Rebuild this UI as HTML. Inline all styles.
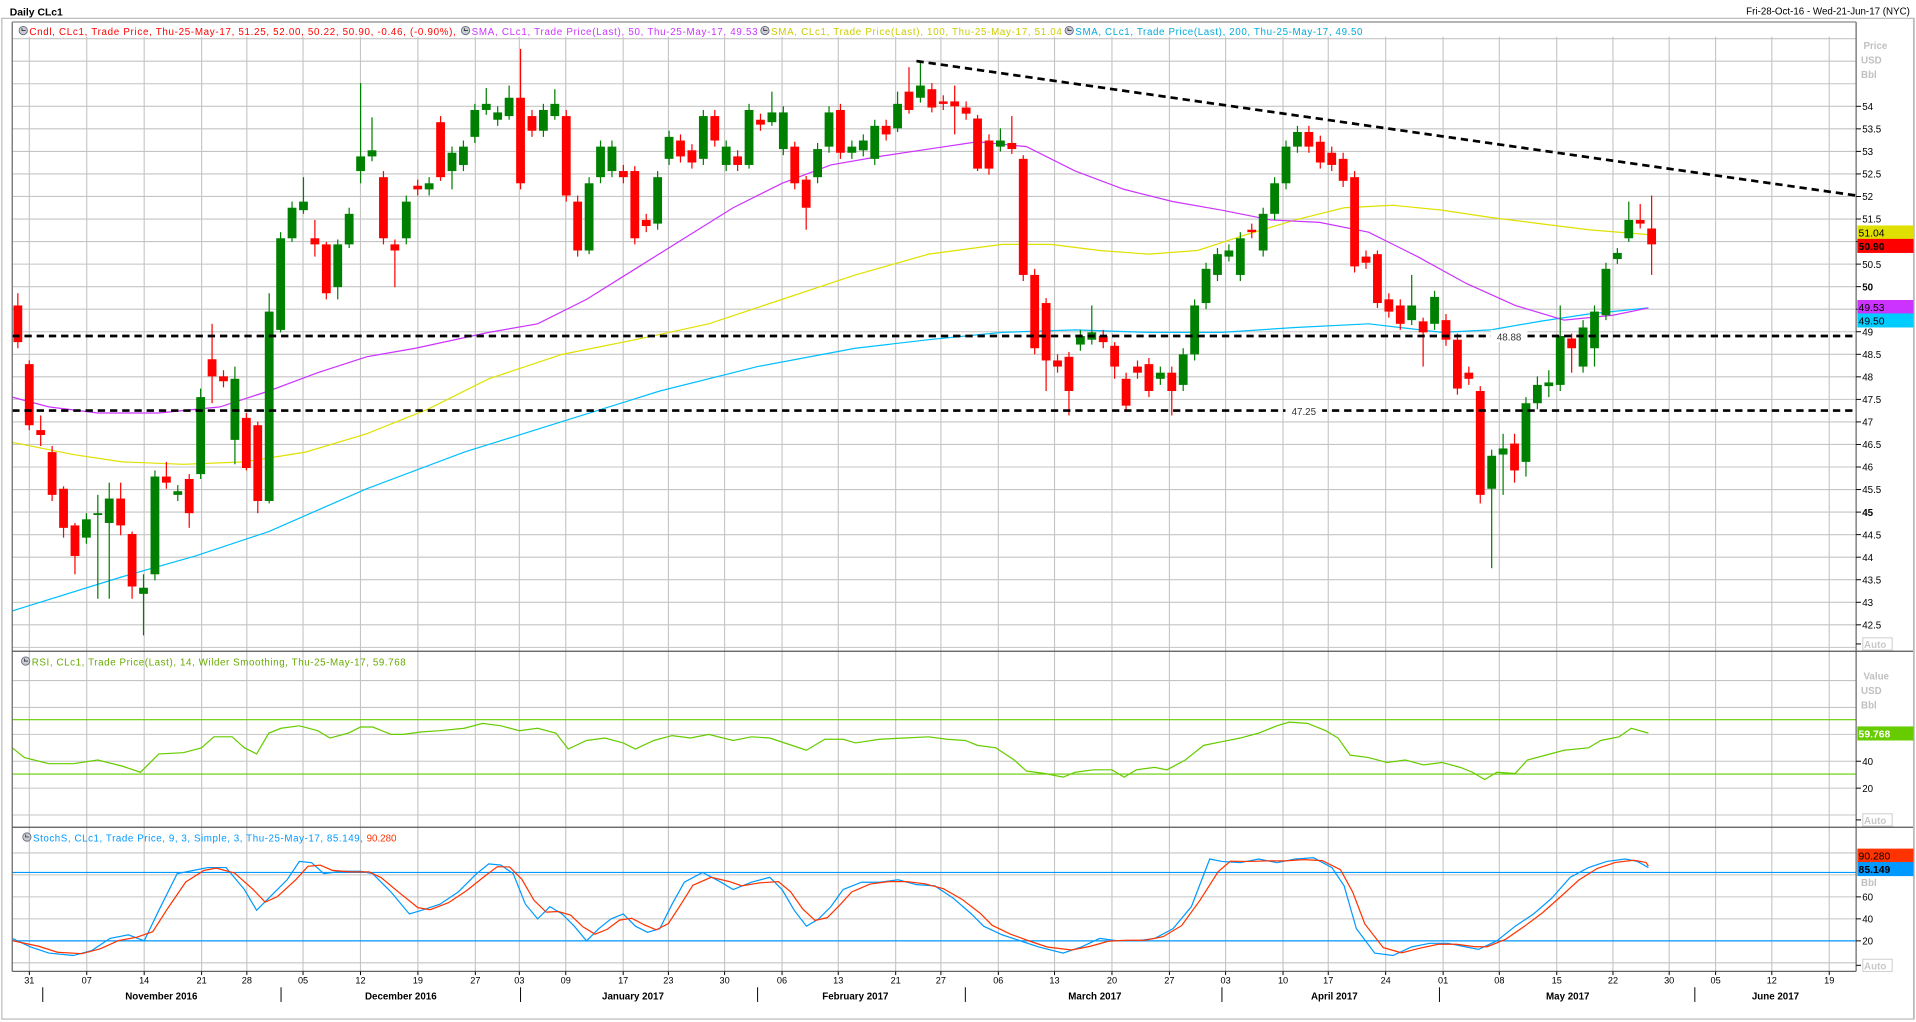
<!DOCTYPE html>
<html><head><meta charset="utf-8"><style>
html,body{margin:0;padding:0;background:#fff;overflow:hidden}
svg{display:block}
text{font-family:"Liberation Sans","DejaVu Sans",sans-serif}
</style></head><body>
<svg id="s" width="1916" height="1022" viewBox="0 0 1568 836.4" preserveAspectRatio="none" xmlns="http://www.w3.org/2000/svg"></svg>
<script>
var S=document.getElementById('s'),h='';
function L(x1,y1,x2,y2,c,w,extra){h+='<line x1="'+x1+'" y1="'+y1+'" x2="'+x2+'" y2="'+y2+'" stroke="'+c+'" stroke-width="'+(w||1)+'" '+(extra||'')+'/>';}
function R(x,y,w,hh,c,extra){h+='<rect x="'+x+'" y="'+y+'" width="'+w+'" height="'+hh+'" fill="'+c+'" '+(extra||'')+'/>';}
function T(x,y,t,c,sz,extra){h+='<text x="'+x+'" y="'+y+'" fill="'+c+'" font-size="'+(sz||8)+'" '+(extra||'')+'>'+t+'</text>';}
function P(pts,c,w,extra){h+='<polyline fill="none" stroke="'+c+'" stroke-width="'+(w||1)+'" points="'+pts.map(function(p){return p[0]+','+p[1]}).join(' ')+'" '+(extra||'')+'/>';}
var X0=10,X1=1519;
// frame
R(0,0,1568,836.4,'#fff');
R(1.5,15,1565,819,'none','stroke="#bbb" stroke-width="1"');
T(8,12.5,'Daily CLc1','#000',8.5,'font-weight="bold"');
T(1563,12,'Fri-28-Oct-16 - Wed-21-Jun-17 (NYC)','#000',8,'text-anchor="end"');
var PT=18,PB=533,RB=677,SB=795;
var vx=[24,71,118,165,202,248,295,342,389,425,463,510,547,593,640,686,733,770,817,863,910,957,1003,1050,1087,1134,1181,1227,1274,1320,1366,1404,1450,1497];
function vgrid(a,b){vx.forEach(function(x){L(x,a,x,b,'#c4c4c4',0.9);});}
// price pane grid
function py(p){return 87+(54-p)*36.9;}
for(var p=42;p<=56.5;p+=0.5){var y=py(p);if(y>PT+12&&y<PB)L(X0,y,X1,y,'#c4c4c4',0.9);}
vgrid(PT+12,PB);
// RSI grid
function ry(v){return 667-v*1.1;}
[0,20,40,60,80,100].forEach(function(v){L(X0,ry(v),X1,ry(v),'#c4c4c4',0.9);});
vgrid(PB,RB);
// Stoch grid
function sy(v){return 788-0.9*v;}
[0,20,40,60,80,100].forEach(function(v){L(X0,sy(v),X1,sy(v),'#c4c4c4',0.9);});
vgrid(RB,SB);
// MAs
var m50=[[10,325],[40,333],[80,338],[130,338],[180,333],[220,320],[260,305],[300,292],[340,285],[400,272],[440,265],[480,245],[520,220],[560,195],[600,170],[640,150],[680,135],[720,128],[760,122],[800,116],[840,120],[880,140],[920,155],[960,165],[1000,172],[1040,180],[1080,182],[1120,190],[1160,210],[1200,232],[1240,250],[1280,262],[1320,258],[1349,252]];
var m100=[[10,362],[60,372],[100,378],[150,380],[200,378],[250,370],[300,355],[350,335],[400,310],[460,290],[520,278],[580,265],[640,245],[700,225],[760,208],[820,200],[860,200],[900,205],[940,208],[980,205],[1020,192],[1060,180],[1100,170],[1140,168],[1180,172],[1220,178],[1260,183],[1300,188],[1349,192]];
var m200=[[10,500],[100,472],[160,455],[220,435],[300,400],[380,370],[460,345],[540,320],[620,300],[700,285],[760,278],[820,272],[880,270],[940,272],[1000,272],[1060,268],[1120,265],[1180,272],[1220,270],[1260,263],[1300,257],[1349,252]];
P(m200,'#00bfff',1);P(m100,'#e0e000',1);P(m50,'#cc33ff',1);
// candles: [color, bodyTop, bodyBot, wickTop, wickBot]
var C=[['r',250,280,240,285],['r',298,348,295,352],['r',352,356,340,365],['r',370,405],['r',400,432,398,440],['r',430,455,428,470],['g',425,440],['g',420,421,405,490],['g',408,428,395,490],['r',408,430,395,438],['r',437,480,435,490],['g',481,486,470,520],['g',390,470],['r',390,395,378,400],['g',402,405],['r',392,420,388,432],['g',325,388,318,392],['r',294,308,265,330],['r',308,312],['g',310,360,300,380],['r',342,383,338,385],['r',348,410,345,420],['g',255,410,240,412],['g',195,270,190,272],['g',170,195,165,198],['g',165,172,145,175],['r',195,200,180,210],['r',200,240,198,245],['g',200,235,196,245],['g',175,200,170,203],['g',128,140,68,150],['g',123,128,96,132],['r',145,195,140,200],['r',200,205,196,235],['g',165,195],['r',152,155],['g',150,155],['r',100,145,95,148],['g',125,140,120,155],['g',120,135],['g',90,112],['g',85,90,72,94],['g',92,98],['g',80,95,70,98],['r',80,150,40,155],['r',95,107],['g',90,107],['g',85,95,73,98],['r',95,160],['r',165,205],['g',150,205,145,208],['g',120,145],['g',120,140],['r',140,145],['r',140,195,136,200],['r',180,185],['g',145,183],['g',112,130],['r',115,128],['r',123,133],['g',95,130],['r',95,115],['g',120,135],['r',128,135],['g',90,135,85,138],['r',98,102],['g',92,100,75,103],['g',92,122],['r',120,150,116,155],['r',147,170,144,188],['g',122,145],['g',92,120],['r',90,125],['g',120,125],['g',115,123],['g',103,130],['r',103,110],['g',85,105,75,108],['r',75,90,55,93],['g',70,80,50,84],['r',73,88,68,92],['r',83,85],['r',83,87,70,110],['r',88,93],['r',97,138,94,140],['r',115,138],['g',115,120,105,124],['r',117,122,95,126],['r',130,225,127,230],['r',225,285],['r',248,295,244,320],['r',295,300],['r',292,320,288,340],['g',275,282],['g',272,278,250,282],['r',275,280],['r',283,300,280,310],['r',310,332],['r',300,305],['r',298,320],['g',305,310],['r',305,320,300,340],['g',290,315],['g',250,290],['g',220,248],['g',208,225],['g',205,210,200,214],['g',195,225],['r',188,190],['g',175,205],['g',150,175],['g',120,150],['g',108,120],['r',108,120],['r',116,133],['r',125,135],['r',130,148],['r',145,218],['r',210,215],['r',208,248,205,252],['r',245,255],['r',250,265],['g',250,262,225,266],['r',263,272,260,300],['g',243,265],['r',262,278],['r',278,318],['r',305,310],['r',320,405,316,412],['g',373,400,368,465],['g',367,372,355,405],['r',363,385,355,395],['g',330,378,325,390],['g',315,330,308,335],['g',313,316,303,325],['g',275,315,250,320],['r',277,285,273,305],['g',268,300,262,305],['g',255,285,250,300],['g',220,258,215,262],['g',207,212,203,216],['g',180,195,165,198],['r',180,183,167,187],['r',187,200,160,225]];
C.forEach(function(c,k){var x=14.6+k*9.35;var col=c[0]=='g'?'#008000':'#ff0000';var wt=c[3]||c[1]-5,wb=c[4]||c[2]+5;
L(x,wt,x,wb,col,1);R(x-3.6,c[1],7.2,Math.max(1.5,c[2]-c[1]),col);});
// dashed lines
L(X0,275,X1,275,'#000',2.2,'stroke-dasharray="6,4"');
L(X0,336,X1,336,'#000',2.2,'stroke-dasharray="6,4"');
L(750,50,X1,160,'#000',2.2,'stroke-dasharray="6,4"');
R(1220,270,30,10,'#fff');T(1235,278.5,'48.88','#333',8,'text-anchor="middle"');
R(1052,331,30,10,'#fff');T(1067,339.5,'47.25','#333',8,'text-anchor="middle"');
// RSI
L(X0,589,X1,589,'#66cc00',1);L(X0,633.5,X1,633.5,'#66cc00',1);
var rsi=[[10,612],[20,620],[40,625],[60,625],[80,622],[100,627],[115,632],[130,617],[150,616],[165,612],[175,603],[190,603],[200,612],[210,617],[220,600],[230,596],[245,594],[260,598],[270,604],[285,600],[295,595],[305,595],[320,601],[330,601],[345,599],[360,598],[380,596],[395,592],[410,594],[425,598],[440,596],[455,600],[465,613],[480,606],[495,604],[510,608],[520,613],[535,606],[550,602],[565,604],[580,601],[600,606],[615,603],[630,604],[645,609],[660,614],[675,605],[690,605],[700,608],[720,605],[740,604],[760,603],[775,605],[790,606],[800,610],[815,612],[830,622],[840,631],[855,633],[870,636],[880,632],[895,630],[910,630],[920,636],[930,630],[945,628],[955,630],[970,622],[985,610],[1000,607],[1015,604],[1030,600],[1045,594],[1055,591],[1070,592],[1085,598],[1095,604],[1105,618],[1120,620],[1135,624],[1150,622],[1165,626],[1180,624],[1195,628],[1205,632],[1215,638],[1225,632],[1240,633],[1250,622],[1265,618],[1280,614],[1300,612],[1310,606],[1325,603],[1335,596],[1349,600]];
P(rsi,'#66cc00',1);
// Stoch
L(X0,714,X1,714,'#0099ff',1);L(X0,770,X1,770,'#0099ff',1);
var sk=[[10,768],[25,775],[40,780],[60,782],[75,778],[90,768],[105,765],[118,770],[130,745],[145,715],[160,712],[170,710],[185,710],[200,728],[210,745],[220,735],[235,720],[245,705],[255,706],[265,715],[280,713],[295,713],[305,715],[320,730],[335,748],[345,745],[360,740],[375,730],[390,715],[400,707],[410,708],[420,715],[430,740],[440,752],[450,742],[460,748],[470,758],[480,770],[490,760],[500,752],[510,748],[520,758],[530,763],[540,760],[550,740],[560,722],[575,714],[590,722],[600,728],[615,722],[630,718],[640,728],[650,745],[660,758],[670,752],[680,742],[690,728],[705,722],[720,722],[735,720],[750,724],[765,725],[780,735],[795,748],[805,758],[820,765],[835,770],[850,775],[870,780],[885,775],[900,768],[915,770],[930,770],[945,768],[960,760],[975,742],[990,703],[1000,705],[1015,706],[1030,703],[1045,706],[1060,703],[1075,702],[1090,710],[1100,725],[1110,760],[1125,780],[1140,782],[1155,775],[1170,772],[1185,772],[1200,775],[1210,777],[1225,770],[1240,758],[1255,748],[1270,735],[1285,718],[1300,710],[1315,705],[1330,703],[1340,705],[1349,710]];
var sd=[];for(var i=0;i<sk.length;i++){var a=sk[Math.max(0,i-1)],b=sk[i],c2=sk[Math.min(sk.length-1,i+1)];sd.push([Math.min(1349,b[0]+7),((a[1]+b[1]*2+c2[1])/4).toFixed(1)]);}
sd[0][0]=10;
P(sk,'#0099ff',1);P(sd,'#ff3300',1);
// pane borders
L(X0,PT,X0,SB,'#666',1);L(X1,PT,X1,SB,'#666',1);L(X0,PT,X1,PT,'#888',1);
L(X0,PB,1566,PB,'#555',1);L(X0,RB,1566,RB,'#555',1);L(X0,SB,X1,SB,'#666',1);
L(1566,15,1566,834,'#bbb',1);
// legends
R(X0+1,PT+1,1507,11,'#fff');
function icon(x,y){h+='<circle cx="'+x+'" cy="'+y+'" r="3.4" fill="#c8ccd4" stroke="#667" stroke-width="0.7"/><path d="M'+(x-1)+' '+(y-2)+'V'+y+'H'+(x+2)+'" stroke="#333" stroke-width="0.7" fill="none"/>';}
icon(19,25);T(24,28.5,'Cndl, CLc1, Trade Price, Thu-25-May-17, 51.25, 52.00, 50.22, 50.90, -0.46, (-0.90%),','#ff0000',8,'textLength="349"');
icon(381,25);T(386,28.5,'SMA, CLc1, Trade Price(Last),  50,  Thu-25-May-17, 49.53','#cc33ff',8,'textLength="234"');
icon(626,25);T(631,28.5,'SMA, CLc1, Trade Price(Last),  100,  Thu-25-May-17, 51.04','#cccc00',8,'textLength="238"');
icon(875,25);T(880,28.5,'SMA, CLc1, Trade Price(Last),  200,  Thu-25-May-17, 49.50','#00aadd',8,'textLength="235"');
icon(21,541);T(26,544.5,'RSI, CLc1, Trade Price(Last),  14,  Wilder Smoothing,  Thu-25-May-17, 59.768','#66aa00',8,'textLength="306"');
icon(22,685);T(27,688.5,'StochS, CLc1, Trade Price,  9,  3,  Simple,  3,  Thu-25-May-17, 85.149,','#0099ff',8,'textLength="270"');
T(300,688.5,'90.280','#ff3300',8);
// price axis
for(var p=42.5;p<=54;p+=0.5){var y=py(p);L(X1,y,X1+4,y,'#000',0.8);T(1524,y+3,(p%1==0?p.toFixed(0):p.toFixed(1)),'#000',8,(p==50||p==45)?'font-weight="bold"':'');}
T(1525,40,'Price','#c0c0c0',8,'font-weight="bold"');T(1523,52,'USD','#c0c0c0',8,'font-weight="bold"');T(1523,64,'Bbl','#c0c0c0',8,'font-weight="bold"');
function badge(y,t,bg,fc,bold){R(X1+1,y-5.5,46,11.5,bg);T(X1+2,y+3.5,t,fc,8.5,bold?'font-weight="bold"':'');}
badge(190,'51.04','#e0e000','#000');badge(201,'50.90','#ff0000','#000',1);
badge(251,'49.53','#cc33ff','#000');badge(262,'49.50','#00ccff','#000');
function auto(y){L(X1,y,X1+4,y,'#000',0.8);R(1524.5,y-5,24,10,'#fff','stroke="#ccc" stroke-width="0.8"');T(1525.5,y+3.5,'Auto','#c8c8c8',8,'font-weight="bold"');}
auto(527);
// RSI axis
T(1525,556,'Value','#c0c0c0',8,'font-weight="bold"');T(1523,568,'USD','#c0c0c0',8,'font-weight="bold"');T(1523,580,'Bbl','#c0c0c0',8,'font-weight="bold"');
[40,20].forEach(function(v){L(X1,ry(v),X1+4,ry(v),'#000',0.8);T(1524,ry(v)+3,v,'#000',8);});
auto(671);badge(600,'59.768','#66cc00','#fff',1);
// Stoch axis
T(1523,725,'Bbl','#c0c0c0',8,'font-weight="bold"');
[60,40,20].forEach(function(v){L(X1,sy(v),X1+4,sy(v),'#000',0.8);T(1524,sy(v)+3,v,'#000',8);});
auto(790);badge(700,'90.280','#ff3300','#000');badge(711,'85.149','#0099ff','#000',1);
// x axis
var dl=['31','07','14','21','28','05','12','19','27','03','09','17','23','30','06','13','21','27','06','13','20','27','03','10','17','24','01','08','15','22','30','05','12','19'];
vx.forEach(function(x,i){L(x,SB,x,SB+3,'#000',0.8);T(x,805,dl[i],'#000',7.5,'text-anchor="middle"');});
[35,230,426,620,790,1000,1178,1387].forEach(function(x){L(x,808,x,820,'#000',0.8);});
[[132,'November 2016'],[328,'December 2016'],[518,'January 2017'],[700,'February 2017'],[896,'March 2017'],[1092,'April 2017'],[1283,'May 2017'],[1453,'June 2017']].forEach(function(m){T(m[0],818,m[1],'#000',8,'text-anchor="middle" font-weight="bold"');});
S.innerHTML=h;
</script>
</body></html>
